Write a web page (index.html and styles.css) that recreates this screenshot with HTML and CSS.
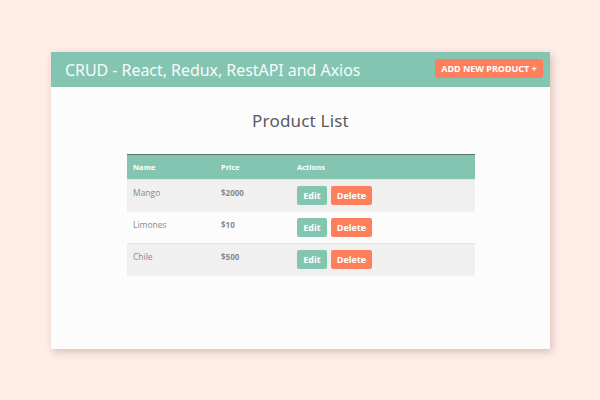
FILE: index.html
```html
<!DOCTYPE html>
<html>
<head>
<meta charset="utf-8">
<link rel="stylesheet" href="styles.css">
</head>
<body>
<div class="app">
  <header class="navbar">
    <h1 class="brand">CRUD - React, Redux, RestAPI and Axios</h1>
    <a class="btn-add">ADD NEW PRODUCT +</a>
  </header>
  <main class="content">
    <h2 class="title">Product List</h2>
    <table class="products">
      <thead>
        <tr><th class="c-name">Name</th><th class="c-price">Price</th><th>Actions</th></tr>
      </thead>
      <tbody>
        <tr><td class="name">Mango</td><td class="price">$2000</td><td><span class="btn edit">Edit</span><span class="btn delete">Delete</span></td></tr>
        <tr><td class="name">Limones</td><td class="price">$10</td><td><span class="btn edit">Edit</span><span class="btn delete">Delete</span></td></tr>
        <tr><td class="name">Chile</td><td class="price">$500</td><td><span class="btn edit">Edit</span><span class="btn delete">Delete</span></td></tr>
      </tbody>
    </table>
  </main>
</div>
</body>
</html>
```
FILE: styles.css
```css
html, body { margin: 0; padding: 0; }
body {
  background: #ffede6;
  width: 600px;
  height: 400px;
  padding-top: 52px;
  box-sizing: border-box;
  font-family: "Open Sans", sans-serif;
}
.app {
  margin-left: 51px;
  width: 499px;
  height: 297px;
  background: #fcfcfc;
  box-shadow: 2px 3px 8px rgba(120, 90, 80, 0.3);
}
.navbar {
  height: 35px;
  background: #84c5b2;
  display: flex;
  align-items: center;
  justify-content: space-between;
  padding: 0 7px 0 14px;
}
.brand {
  margin: 0;
  font-family: "Noto Sans", sans-serif;
  font-weight: 400;
  font-size: 16px;
  color: #f7fbf9;
  letter-spacing: -0.05px;
}
.btn-add {
  background: #ff7f5c;
  color: #fff;
  font-family: "Noto Sans", sans-serif;
  font-weight: 700;
  font-size: 9px;
  border-radius: 3px;
  height: 19px;
  width: 108px;
  display: flex;
  align-items: center;
  justify-content: center;
  margin-top: -2px;
}
.content {
  padding-top: 22px;
  display: flex;
  flex-direction: column;
  align-items: center;
}
.title {
  margin: 0 0 22px 0;
  font-family: "Noto Sans", sans-serif;
  font-weight: 400;
  font-size: 17px;
  color: #555a62;
  letter-spacing: 0.2px;
}
.products {
  width: 348px;
  border-collapse: collapse;
  margin-left: 1px;
  font-size: 8px;
}
.products thead tr {
  background: #84c5b2;
  border-top: 1px solid #5d6f6a;
}
.products th {
  color: #fff;
  font-weight: 700;
  text-align: left;
  height: 24px;
  padding: 0 6px;
  font-size: 7.5px;
}
.c-name { width: 76px; }
.c-price { width: 64px; }
.products td {
  height: 32px;
  padding: 0 6px;
  color: #8a8a8a;
  vertical-align: top;
  padding-top: 7px;
  box-sizing: border-box;
}
.products tbody tr:nth-child(odd) { background: #f0f0f0; }
.products tbody tr:nth-child(odd) td { border-top: 1px solid #e0e6e4; }
.products td.name { font-size: 8.5px; color: #8b8b8b; }
.products td.price { font-weight: 700; font-size: 8px; color: #8a8a8a; }
.products td:last-child { padding-top: 6px; }
.btn {
  display: inline-flex;
  align-items: center;
  justify-content: center;
  height: 19px;
  border-radius: 2px;
  color: #fff;
  font-weight: 700;
  font-size: 9px;
  vertical-align: top;
}
.edit { background: #84c5b2; width: 30px; margin-right: 4px; }
.delete { background: #ff7f5c; width: 41px; }
```
